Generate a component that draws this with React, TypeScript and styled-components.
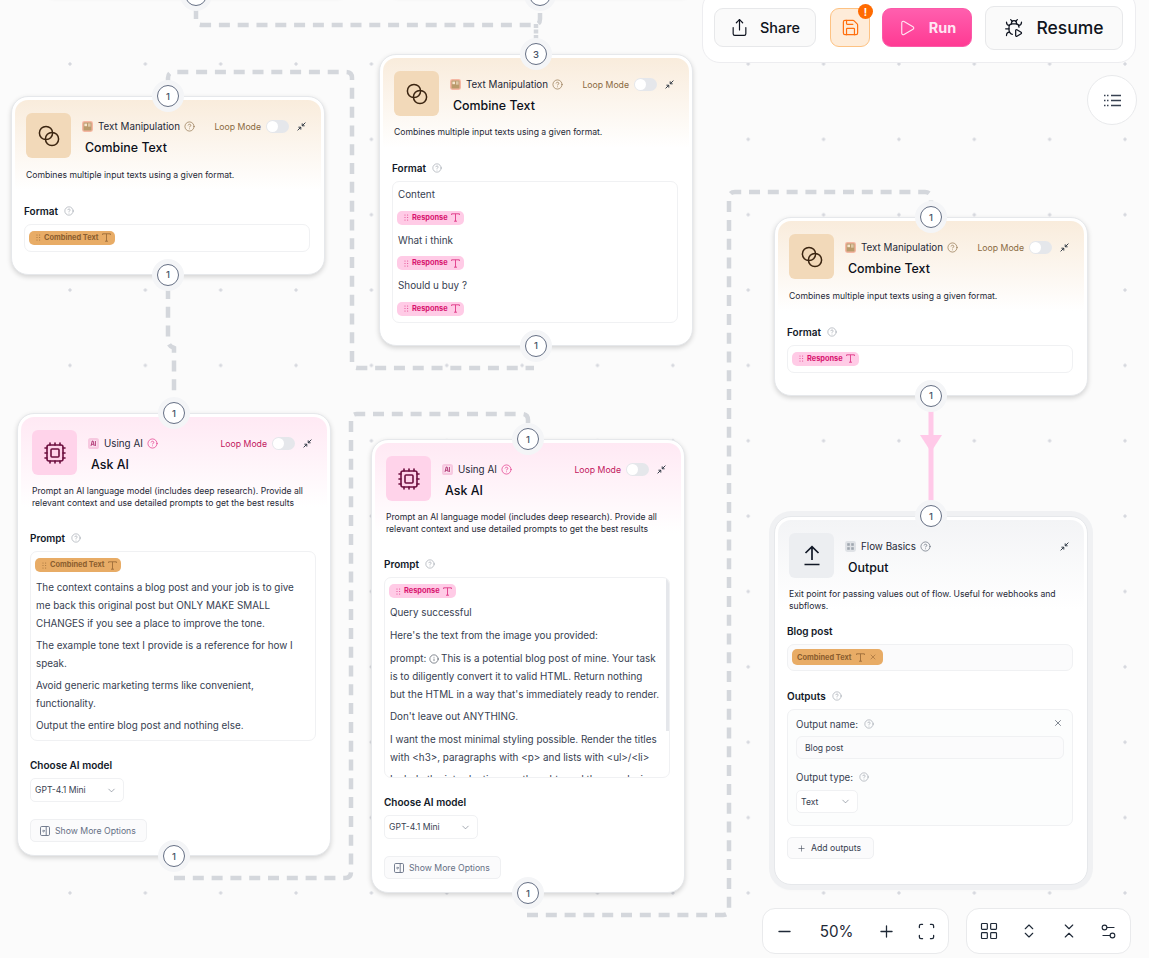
import React from "react";
import styled, { createGlobalStyle } from "styled-components";
import {
  BugPlay, ChevronDown, ChevronsDownUp, ChevronsUpDown, CircleHelp, Cpu, Info, LayoutGrid,
  Minus, Play, Plus, Save, Scan, Settings2, Share, X,
} from "lucide-react";

type Tone = "tan" | "pink" | "gray";

const tones = {
  tan: { head: "#f9ecdc", box: "#f2d9b9", ink: "#3a2410", accent: "#8a6a42", loop: "#8a6a42" },
  pink: { head: "#ffe9f4", box: "#ffd3ea", ink: "#6d0f3f", accent: "#e0267f", loop: "#c2185f" },
  gray: { head: "#f3f4f6", box: "#eceef1", ink: "#111827", accent: "#5b6472", loop: "#5b6472" },
};

const Global = createGlobalStyle`
  html, body { margin: 0; padding: 0; background: #fbfbfb; }
  body { font-family: Inter, "Liberation Sans", sans-serif; color: #111827; }
`;

const Canvas = styled.div`
  position: relative;
  width: 1149px;
  height: 958px;
  overflow: hidden;
  background-color: #fbfbfb;
  background-image: radial-gradient(circle, #d6d8de 1.4px, transparent 1.8px);
  background-size: 75.36px 75.36px;
  background-position: 32.3px 26.3px;
`;

const Edges = styled.svg`
  position: absolute;
  left: 0;
  top: 0;
  width: 1149px;
  height: 958px;
`;

const Node = styled.div<{ $x: number; $y: number; $selected?: boolean }>`
  position: absolute;
  left: ${(p) => p.$x}px;
  top: ${(p) => p.$y}px;
  width: 314px;
  box-sizing: border-box;
  padding: 3px;
  background: #fff;
  border: 1px solid #e6e8eb;
  border-radius: 17px;
  box-shadow: ${(p) =>
    p.$selected ? "0 0 0 5px #f0f1f3, 0 2px 5px rgba(0,0,0,.14)" : "0 2px 5px rgba(0,0,0,.16)"};
`;

const Stub = styled(Node)`
  height: 60px;
`;

const Inner = styled.div<{ $tone: Tone }>`
  border-radius: 13px;
  padding: 13px 11px 0;
  background: linear-gradient(${(p) => tones[p.$tone].head} 0, #fff 90px);
`;

const Handle = styled.div<{ $at: "top" | "bottom" }>`
  position: absolute;
  left: 145px;
  ${(p) => (p.$at === "top" ? "top: -12px;" : "bottom: -12px;")}
  width: 22px;
  height: 22px;
  box-sizing: border-box;
  border: 1px solid #667085;
  border-radius: 50%;
  background: #fff;
  box-shadow: 0 0 0 5px #f4f5f7;
  display: flex;
  align-items: center;
  justify-content: center;
  font-size: 9.5px;
  font-weight: 500;
  color: #475467;
`;

const Header = styled.div`
  display: flex;
  gap: 11px;
  align-items: flex-start;
`;

const IconBox = styled.div<{ $tone: Tone }>`
  width: 45px;
  height: 45px;
  flex: none;
  border-radius: 6px;
  background: ${(p) => tones[p.$tone].box};
  color: ${(p) => tones[p.$tone].ink};
  display: flex;
  align-items: center;
  justify-content: center;
`;

const HeadText = styled.div`
  flex: 1;
  min-width: 0;
`;

const CatRow = styled.div`
  display: flex;
  align-items: center;
  height: 12px;
  margin-top: 7.5px;
  padding-right: 4px;
`;

const CatName = styled.span`
  font-size: 9.8px;
  color: #1f2937;
  margin-left: 5px;
  white-space: nowrap;
`;

const CatHelp = styled(CircleHelp)<{ $tone: Tone }>`
  color: ${(p) => tones[p.$tone].accent};
  margin-left: 4px;
  flex: none;
`;

const Loop = styled.span<{ $tone: Tone }>`
  margin-left: auto;
  font-size: 8.7px;
  color: ${(p) => tones[p.$tone].loop};
  white-space: nowrap;
`;

const Toggle = styled.span`
  flex: none;
  width: 23px;
  height: 13px;
  margin-left: 5px;
  border-radius: 7px;
  background: #e5e7eb;
  position: relative;
  &::after {
    content: "";
    position: absolute;
    left: 1px;
    top: 1px;
    width: 11px;
    height: 11px;
    border-radius: 50%;
    background: #fff;
  }
`;

const CollapseIcon = styled.svg`
  flex: none;
  margin-left: 8px;
`;

const Title = styled.div`
  margin: 7.5px 0 0 3px;
  font-size: 12.4px;
  line-height: 16px;
  font-weight: 500;
  color: #0b0f19;
`;

const Desc = styled.p<{ $top?: number }>`
  margin: ${(p) => p.$top ?? 11}px 0 0;
  font-size: 8.62px;
  line-height: 11.5px;
  color: #1f2937;
`;

const Body = styled.div<{ $bottom: number }>`
  margin: 0 -2px;
  padding-bottom: ${(p) => p.$bottom}px;
`;

const Label = styled.div<{ $top: number; $soft?: boolean }>`
  display: flex;
  align-items: center;
  gap: 6px;
  margin-top: ${(p) => p.$top}px;
  height: 12px;
  font-size: ${(p) => (p.$soft ? "9.7px" : "10px")};
  font-weight: ${(p) => (p.$soft ? 400 : 600)};
  color: ${(p) => (p.$soft ? "#374151" : "#111827")};
  white-space: nowrap;
`;

const FieldHelp = styled(CircleHelp)`
  color: #8a919c;
  flex: none;
`;

const Box = styled.div<{ $h: number; $pad?: number; $scroll?: boolean; $tint?: boolean }>`
  position: relative;
  box-sizing: border-box;
  margin-top: 7px;
  width: 286px;
  height: ${(p) => p.$h}px;
  padding: ${(p) => p.$pad ?? 6}px 5px 0 4px;
  overflow: hidden;
  background: ${(p) => (p.$tint ? "#fbfbfc" : "#fff")};
  border: 1px solid #f0f1f3;
  border-radius: 7px;
  ${(p) =>
    p.$scroll
      ? `&::after { content: ""; position: absolute; right: 0; top: 0; width: 3px; height: 153px; background: #e5e7eb; }`
      : ""}
`;

const Tag = styled.span<{ $kind: "tan" | "pink"; $big?: boolean }>`
  display: inline-flex;
  align-items: center;
  gap: ${(p) => (p.$big ? 4 : 3)}px;
  box-sizing: border-box;
  height: ${(p) => (p.$big ? 16 : 14)}px;
  padding: ${(p) => (p.$big ? "0 6px 0 5px" : "0 4px 0 7px")};
  border-radius: 5px;
  font-size: 7.4px;
  font-weight: 700;
  white-space: nowrap;
  background: ${(p) => (p.$kind === "tan" ? "#e8ac66" : "#ffcbe6")};
  color: ${(p) => (p.$kind === "tan" ? "#8b5e2f" : "#d8146f")};
  vertical-align: top;
`;

const TagIcon = styled.svg`
  flex: none;
`;

const TagRow = styled.div<{ $top?: number }>`
  line-height: 0;
  margin-top: ${(p) => p.$top ?? 0}px;
`;

const Line = styled.p<{ $top: number; $lh?: number }>`
  margin: ${(p) => p.$top}px 0 0 1px;
  font-size: 9.87px;
  line-height: ${(p) => p.$lh ?? 18}px;
  white-space: nowrap;
  color: #374151;
`;

const InlineInfo = styled(Info)`
  vertical-align: -2px;
  margin-right: 2px;
  color: #1f2937;
`;

const SelectBox = styled.div<{ $w: number; $top: number; $h?: number }>`
  box-sizing: border-box;
  display: flex;
  align-items: center;
  justify-content: space-between;
  width: ${(p) => p.$w}px;
  height: ${(p) => p.$h ?? 24}px;
  margin-top: ${(p) => p.$top}px;
  padding: 0 6px 0 4px;
  background: #fff;
  border: 1px solid #f0f1f3;
  border-radius: 5px;
  font-size: 8.6px;
  color: #374151;
  svg { color: #6b7280; }
`;

const GhostButton = styled.div<{ $top: number; $w: number; $h: number; $dark?: boolean }>`
  box-sizing: border-box;
  display: flex;
  align-items: center;
  gap: 5px;
  width: ${(p) => p.$w}px;
  height: ${(p) => p.$h}px;
  margin-top: ${(p) => p.$top}px;
  padding-left: 9px;
  background: #fbfbfc;
  border: 1px solid #eff0f2;
  border-radius: 5px;
  font-size: 8.7px;
  color: ${(p) => (p.$dark ? "#374151" : "#667085")};
`;

const OutputPanel = styled.div`
  position: relative;
  box-sizing: border-box;
  width: 286px;
  height: 117px;
  margin-top: 7px;
  padding: 0 8px;
  background: #fcfdfd;
  border: 1px solid #f0f1f3;
  border-radius: 7px;
`;

const PanelClose = styled(X)`
  position: absolute;
  right: 9px;
  top: 8px;
  color: #374151;
`;

const TextInput = styled.div`
  box-sizing: border-box;
  height: 23px;
  margin-top: 6px;
  padding: 0 8px;
  display: flex;
  align-items: center;
  font-size: 8.6px;
  color: #374151;
  background: #fbfbfc;
  border: 1px solid #f0f1f3;
  border-radius: 6px;
`;

const TopBar = styled.div`
  position: absolute;
  left: 702px;
  top: -10px;
  box-sizing: border-box;
  width: 434px;
  height: 73px;
  padding: 0 12px 0 11px;
  display: flex;
  align-items: center;
  background: #fff;
  border: 1px solid #ededf0;
  border-radius: 18px;
`;

const TopButton = styled.div<{ $w: number; $h: number; $ml: number }>`
  box-sizing: border-box;
  position: relative;
  flex: none;
  width: ${(p) => p.$w}px;
  height: ${(p) => p.$h}px;
  margin-left: ${(p) => p.$ml}px;
  margin-top: 2px;
  display: flex;
  align-items: center;
  justify-content: center;
  background: #fafafa;
  border: 1px solid #e7e8ea;
  border-radius: 9px;
  color: #0f1420;
  font-weight: 500;
`;

const ShareButton = styled(TopButton)`
  gap: 11px;
  font-size: 14.4px;
`;

const SaveButton = styled(TopButton)`
  background: #feecd9;
  border-color: #fdc283;
  color: #ff6f0f;
`;

const Badge = styled.span`
  position: absolute;
  right: -4px;
  top: -5px;
  width: 15px;
  height: 15px;
  border-radius: 50%;
  background: #ff6a00;
  color: #fff;
  font-size: 10px;
  font-weight: 700;
  display: flex;
  align-items: center;
  justify-content: center;
`;

const RunButton = styled(TopButton)`
  gap: 13px;
  font-size: 14.4px;
  font-weight: 700;
  color: #ffe6f3;
  background: linear-gradient(#ff5fae, #ff3a93);
  border-color: #fb5aa8;
`;

const ResumeButton = styled(TopButton)`
  gap: 12px;
  font-size: 17.5px;
`;

const RoundButton = styled.div`
  position: absolute;
  left: 1087px;
  top: 75px;
  width: 50px;
  height: 50px;
  box-sizing: border-box;
  border-radius: 50%;
  background: #fff;
  border: 1px solid #e9eaec;
  display: flex;
  align-items: center;
  justify-content: center;
  color: #374151;
`;

const BottomBar = styled.div<{ $x: number; $w: number }>`
  position: absolute;
  left: ${(p) => p.$x}px;
  top: 908px;
  width: ${(p) => p.$w}px;
  height: 46px;
  box-sizing: border-box;
  display: flex;
  align-items: center;
  justify-content: space-between;
  padding: 0 12px;
  background: #fff;
  border: 1px solid #e9eaec;
  border-radius: 13px;
  color: #1f2937;
`;

const Percent = styled.span`
  font-size: 15.2px;
  font-weight: 400;
  margin: 0 3px 0 5px;
`;

const Grip = () => (
  <TagIcon width="5" height="7" viewBox="0 0 5 7" fill="currentColor" opacity=".7">
    <circle cx="1" cy="1" r=".6" /><circle cx="3.6" cy="1" r=".6" />
    <circle cx="1" cy="3.5" r=".6" /><circle cx="3.6" cy="3.5" r=".6" />
    <circle cx="1" cy="6" r=".6" /><circle cx="3.6" cy="6" r=".6" />
  </TagIcon>
);

const TypeGlyph = () => (
  <TagIcon width="9" height="9" viewBox="0 0 9 9" fill="none" stroke="currentColor" strokeWidth=".9" opacity=".8">
    <path d="M.6 2V.8h7.8V2M4.5.8v7.4M3 8.2h3" />
  </TagIcon>
);

const Chip = ({ kind, label, closable }: { kind: "tan" | "pink"; label: string; closable?: boolean }) => (
  <Tag $kind={kind} $big={closable}>
    {!closable && <Grip />}
    <span>{label}</span>
    <TypeGlyph />
    {closable && <X size={8} strokeWidth={1.6} />}
  </Tag>
);

const Rings = () => (
  <svg width="22" height="22" viewBox="0 0 22 22" fill="none" stroke="currentColor" strokeWidth="1.5">
    <circle cx="8" cy="8" r="6.6" /><circle cx="14" cy="14" r="6.6" />
  </svg>
);

const OutputGlyph = () => (
  <svg width="20" height="22" viewBox="0 0 20 22" fill="none" stroke="currentColor" strokeWidth="1.7">
    <path d="M10 15V2M3.5 8 10 1.6 16.5 8M2.5 19.5h15" />
  </svg>
);

const PanelGlyph = () => (
  <svg width="10" height="10" viewBox="0 0 10 10" fill="none" stroke="currentColor" strokeWidth=".9">
    <rect x=".5" y=".5" width="9" height="9" rx="1.2" />
    <path d="M6.2.5v9M2.2 5h2.2M3.4 3.8 4.6 5 3.4 6.2" />
  </svg>
);

const CatGlyph = ({ tone }: { tone: Tone }) => {
  if (tone === "tan")
    return (
      <svg width="11" height="11" viewBox="0 0 11 11">
        <rect width="11" height="11" rx="2.4" fill="#f5b7a3" />
        <rect x="1.5" y="1.5" width="8" height="8" fill="#b99a6b" />
        <rect x="2.4" y="2.6" width="2.6" height="2.6" fill="#f6e6cf" />
        <rect x="6" y="2.6" width="2.6" height="1" fill="#f6e6cf" />
        <rect x="6" y="4.4" width="2.6" height="1" fill="#f6e6cf" />
      </svg>
    );
  if (tone === "pink")
    return (
      <svg width="11" height="11" viewBox="0 0 11 11">
        <rect width="11" height="11" rx="2.6" fill="#f7c9e0" />
        <rect x="2" y="2" width="7" height="7" rx="1.5" fill="#fbe0ee" />
        <path d="M3 8l1.2-5h.9L6.2 8M3.6 6.3h2M7.4 3v5" stroke="#a3195f" strokeWidth=".8" fill="none" />
      </svg>
    );
  return (
    <svg width="11" height="11" viewBox="0 0 11 11">
      <rect width="11" height="11" rx="2.4" fill="#dfe2e6" />
      <rect x="2.2" y="2.2" width="2.6" height="2.6" fill="#a0a7b0" />
      <rect x="6.2" y="2.2" width="2.6" height="2.6" fill="#a0a7b0" />
      <rect x="2.2" y="6.2" width="2.6" height="2.6" fill="#a0a7b0" />
      <rect x="6.2" y="6.2" width="2.6" height="2.6" fill="#a0a7b0" />
    </svg>
  );
};

const Collapse = () => (
  <CollapseIcon width="9" height="9" viewBox="0 0 9 9" fill="none" stroke="#1f2937" strokeWidth=".9">
    <path d="M8.4.6 5.4 3.6M5.2 1.4v2.4h2.4M.6 8.4l3-3M1.4 5.2h2.4v2.4" />
  </CollapseIcon>
);

const ListGlyph = () => (
  <svg width="17" height="13" viewBox="0 0 17 13" stroke="currentColor" strokeWidth="1.4" fill="none">
    <path d="M0 1.5h1.5M3 1.5h1.5M7 1.5h10M0 6.5h1.5M3 6.5h1.5M7 6.5h10M0 11.5h1.5M3 11.5h1.5M7 11.5h10" />
  </svg>
);

const Head = ({ tone, glyph, category, title, loop = true, desc, descTop }: {
  tone: Tone; glyph: React.ReactNode; category: string; title: string; loop?: boolean; desc: React.ReactNode; descTop?: number;
}) => (
  <>
    <Header>
      <IconBox $tone={tone}>{glyph}</IconBox>
      <HeadText>
        <CatRow>
          <CatGlyph tone={tone} />
          <CatName>{category}</CatName>
          <CatHelp $tone={tone} size={11} strokeWidth={1.4} />
          {loop ? (
            <>
              <Loop $tone={tone}>Loop Mode</Loop>
              <Toggle />
              <Collapse />
            </>
          ) : (
            <>
              <Loop $tone={tone} />
              <Collapse />
            </>
          )}
        </CatRow>
        <Title>{title}</Title>
      </HeadText>
    </Header>
    <Desc $top={descTop}>{desc}</Desc>
  </>
);

const Field = ({ top, name, soft }: { top: number; name: string; soft?: boolean }) => (
  <Label $top={top} $soft={soft}>
    {name}
    <FieldHelp size={10} strokeWidth={1.3} />
  </Label>
);

const CombineNode = ({ x, y, chip, kind }: { x: number; y: number; chip: string; kind: "tan" | "pink" }) => (
  <Node $x={x} $y={y}>
    <Handle $at="top">1</Handle>
    <Inner $tone="tan">
      <Head tone="tan" glyph={<Rings />} category="Text Manipulation" title="Combine Text" descTop={12}
        desc="Combines multiple input texts using a given format." />
      <Body $bottom={19}>
        <Field top={23} name="Format" />
        <Box $h={28}><Chip kind={kind} label={chip} /></Box>
      </Body>
    </Inner>
    <Handle $at="bottom">1</Handle>
  </Node>
);

const AI_DESC = "Prompt an AI language model (includes deep research). Provide all relevant context and use detailed prompts to get the best results";

const AskNode = ({ x, y, children, chooseTop, chip, boxH, scroll }: {
  x: number; y: number; children: React.ReactNode; chooseTop: number; chip: React.ReactNode; boxH: number; scroll?: boolean;
}) => (
  <Node $x={x} $y={y}>
    <Handle $at="top">1</Handle>
    <Inner $tone="pink">
      <Head tone="pink" glyph={<Cpu size={24} strokeWidth={1.6} />} category="Using AI" title="Ask AI" desc={AI_DESC} />
      <Body $bottom={10}>
        <Field top={23} name="Prompt" />
        <Box $h={boxH} $scroll={scroll}>
          <TagRow>{chip}</TagRow>
          {children}
        </Box>
        <Label $top={chooseTop}>Choose AI model</Label>
        <SelectBox $w={94} $top={7}>GPT-4.1 Mini <ChevronDown size={11} strokeWidth={1.3} /></SelectBox>
        <GhostButton $top={17} $w={117} $h={23}>
          <PanelGlyph /> Show More Options
        </GhostButton>
      </Body>
    </Inner>
    <Handle $at="bottom">1</Handle>
  </Node>
);

export default function App() {
  return (
    <Canvas>
      <Global />
      <Edges viewBox="0 0 1149 958" fill="none" stroke="#d4d7dc" strokeWidth="4.5" strokeDasharray="11 7.8">
        <path d="M196 8v12q0 5 6 5H534q6 0 6-6v-8" />
        <path d="M536 24V44" strokeDasharray="4 1.5" />
        <path d="M168 84v-6q0-6 6-6H346q6 0 6 6V362q0 6 6 6H534" />
        <path d="M168 288v52q0 6 6 8V404" />
        <path d="M174 878H345q6 0 6-6V420q0-6 6-6H522q6 0 6 6v8" />
        <path d="M527 915H723q6 0 6-6V198q0-6 6-6H925q6 0 6 6v8" />
        <path d="M931 400V508" stroke="#ffc9e8" strokeWidth="5" strokeDasharray="none" />
        <path d="M920 435H942L931 452Z" fill="#ffc9e8" stroke="none" />
      </Edges>

      <Stub $x={39} $y={-65}><Handle $at="bottom">1</Handle></Stub>
      <Stub $x={383} $y={-65}><Handle $at="bottom">1</Handle></Stub>

      <CombineNode x={11} y={96} chip="Combined Text" kind="tan" />

      <Node $x={379} $y={54}>
        <Handle $at="top">3</Handle>
        <Inner $tone="tan">
          <Head tone="tan" glyph={<Rings />} category="Text Manipulation" title="Combine Text"
            desc="Combines multiple input texts using a given format." />
          <Body $bottom={19}>
            <Field top={23} name="Format" />
            <Box $h={142}>
              <Line $top={-1} $lh={14}>Content</Line>
              <TagRow $top={10}><Chip kind="pink" label="Response" /></TagRow>
              <Line $top={8.6} $lh={14}>What i think</Line>
              <TagRow $top={9}><Chip kind="pink" label="Response" /></TagRow>
              <Line $top={8} $lh={14}>Should u buy ?</Line>
              <TagRow $top={9.5}><Chip kind="pink" label="Response" /></TagRow>
            </Box>
          </Body>
        </Inner>
        <Handle $at="bottom">1</Handle>
      </Node>

      <CombineNode x={774} y={217} chip="Response" kind="pink" />

      <AskNode x={17} y={413} boxH={190} chooseTop={18} chip={<Chip kind="tan" label="Combined Text" />}>
        <Line $top={6}>The context contains a blog post and your job is to give<br />me back this original post but ONLY MAKE SMALL<br />CHANGES if you see a place to improve the tone.</Line>
        <Line $top={4}>The example tone text I provide is a reference for how I<br />speak.</Line>
        <Line $top={4}>Avoid generic marketing terms like convenient,<br />functionality.</Line>
        <Line $top={4}>Output the entire blog post and nothing else.</Line>
      </AskNode>

      <AskNode x={371} y={439} boxH={201} chooseTop={18} scroll chip={<Chip kind="pink" label="Response" />}>
        <Line $top={5}>Query successful</Line>
        <Line $top={5}>Here's the text from the image you provided:</Line>
        <Line $top={4.5}>prompt: <InlineInfo size={10} strokeWidth={1.3} />This is a potential blog post of mine. Your task<br />is to diligently convert it to valid HTML. Return nothing<br />but the HTML in a way that's immediately ready to render.</Line>
        <Line $top={4}>Don't leave out ANYTHING.</Line>
        <Line $top={5}>I want the most minimal styling possible. Render the titles<br />with &lt;h3&gt;, paragraphs with &lt;p&gt; and lists with &lt;ul&gt;/&lt;li&gt;</Line>
        <Line $top={4}>Include the introduction, my thoughts and the conclusion</Line>
      </AskNode>

      <Node $x={774} $y={516} $selected>
        <Handle $at="top">1</Handle>
        <Inner $tone="gray">
          <Head tone="gray" glyph={<OutputGlyph />} category="Flow Basics" title="Output" loop={false}
            desc="Exit point for passing values out of flow. Useful for webhooks and subflows." />
          <Body $bottom={22}>
            <Label $top={13}>Blog post</Label>
            <Box $h={27} $pad={4} $tint><Chip kind="tan" label="Combined Text" closable /></Box>
            <Field top={19} name="Outputs" />
            <OutputPanel>
              <PanelClose size={10} strokeWidth={1.5} />
              <Field top={8} name="Output name:" soft />
              <TextInput>Blog post</TextInput>
              <Field top={12} name="Output type:" soft />
              <SelectBox $w={62} $top={7} $h={23}>Text <ChevronDown size={11} strokeWidth={1.3} /></SelectBox>
            </OutputPanel>
            <GhostButton $top={11} $w={87} $h={22} $dark>
              <Plus size={9} strokeWidth={1.5} />
              Add outputs
            </GhostButton>
          </Body>
        </Inner>
      </Node>

      <TopBar>
        <ShareButton $w={102} $h={39} $ml={0}><Share size={19} strokeWidth={1.5} /> Share</ShareButton>
        <SaveButton $w={40} $h={39} $ml={14}>
          <Save size={19} strokeWidth={1.5} />
          <Badge>!</Badge>
        </SaveButton>
        <RunButton $w={90} $h={39} $ml={12}><Play size={18} strokeWidth={1.5} /> Run</RunButton>
        <ResumeButton $w={138} $h={44} $ml={13}><BugPlay size={20} strokeWidth={1.5} /> Resume</ResumeButton>
      </TopBar>

      <RoundButton><ListGlyph /></RoundButton>

      <BottomBar $x={762} $w={187}>
        <Minus size={19} strokeWidth={1.6} />
        <Percent>50%</Percent>
        <Plus size={19} strokeWidth={1.6} />
        <Scan size={19} strokeWidth={1.6} />
      </BottomBar>

      <BottomBar $x={966} $w={165}>
        <LayoutGrid size={20} strokeWidth={1.4} />
        <ChevronsUpDown size={18} strokeWidth={1.5} />
        <ChevronsDownUp size={18} strokeWidth={1.5} />
        <Settings2 size={19} strokeWidth={1.4} />
      </BottomBar>
    </Canvas>
  );
}
